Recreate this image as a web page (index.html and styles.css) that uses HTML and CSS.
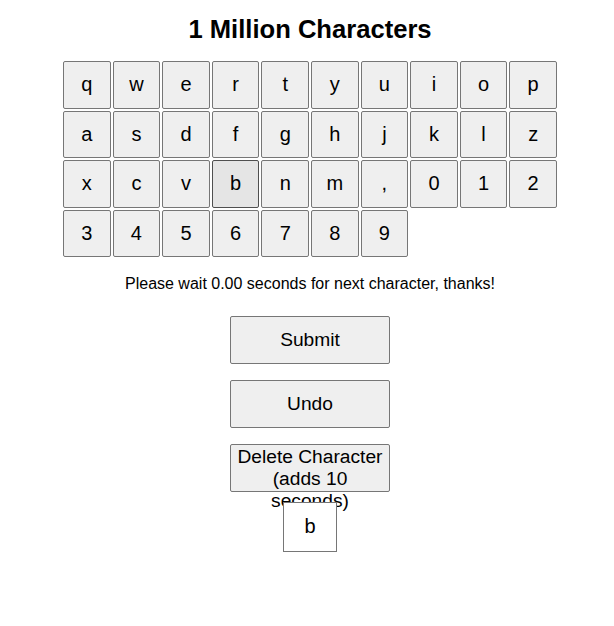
FILE: index.html
```html
<!DOCTYPE html>
<html>
<head>
<meta charset="utf-8">
<link rel="stylesheet" href="styles.css">
</head>
<body>
<div class="page">
  <h2 class="title">1 Million Characters</h2>
  <div class="keyboard">
    <button class="key">q</button><button class="key">w</button><button class="key">e</button><button class="key">r</button><button class="key">t</button><button class="key">y</button><button class="key">u</button><button class="key">i</button><button class="key">o</button><button class="key">p</button>
    <button class="key">a</button><button class="key">s</button><button class="key">d</button><button class="key">f</button><button class="key">g</button><button class="key">h</button><button class="key">j</button><button class="key">k</button><button class="key">l</button><button class="key">z</button>
    <button class="key">x</button><button class="key">c</button><button class="key">v</button><button class="key key-hover">b</button><button class="key">n</button><button class="key">m</button><button class="key">,</button><button class="key">0</button><button class="key">1</button><button class="key">2</button>
    <button class="key">3</button><button class="key">4</button><button class="key">5</button><button class="key">6</button><button class="key">7</button><button class="key">8</button><button class="key">9</button>
  </div>
  <p class="wait">Please wait 0.00 seconds for next character, thanks!</p>
  <div class="actions">
    <button class="action">Submit</button>
    <button class="action">Undo</button>
    <button class="action">Delete Character (adds 10 seconds)</button>
    <div class="current">b</div>
  </div>
</div>
</body>
</html>
```

FILE: styles.css
```css
html, body {
  background: #ffffff;
}
body {
  margin: 8px;
  font-family: "Liberation Sans", Arial, sans-serif;
  color: #000000;
}
.page {
  width: 604px;
  display: flex;
  flex-direction: column;
  align-items: center;
}
.title {
  margin: 6px 0 0 0;
  font-size: 25.6px;
  line-height: 30px;
  font-weight: bold;
}
.keyboard {
  margin-top: 17px;
  display: grid;
  grid-template-columns: repeat(10, 47.6px);
  grid-auto-rows: 47.6px;
  gap: 2px;
}
.key {
  margin: 0;
  padding: 0;
  font-family: "Liberation Sans", Arial, sans-serif;
  font-size: 20px;
  color: #000000;
  background: #efefef;
  border: 1px solid #767676;
  border-radius: 2px;
}
.key-hover {
  background: #e5e5e5;
  border-color: #4f4f4f;
}
.wait {
  margin: 18px 0 0 0;
  font-size: 16px;
  line-height: 18.4px;
}
.actions {
  margin-top: 22px;
  display: flex;
  flex-direction: column;
  align-items: center;
  gap: 16px;
}
.action {
  width: 160px;
  height: 48px;
  margin: 0;
  padding: 1px 6px;
  font-family: "Liberation Sans", Arial, sans-serif;
  font-size: 19.2px;
  line-height: 22px;
  color: #000000;
  background: #efefef;
  border: 1px solid #767676;
  border-radius: 2px;
}
.current {
  margin-top: -6px;
  width: 52px;
  height: 48px;
  display: flex;
  align-items: center;
  justify-content: center;
  font-size: 20px;
  background: #ffffff;
  border: 1px solid #767676;
}
```
